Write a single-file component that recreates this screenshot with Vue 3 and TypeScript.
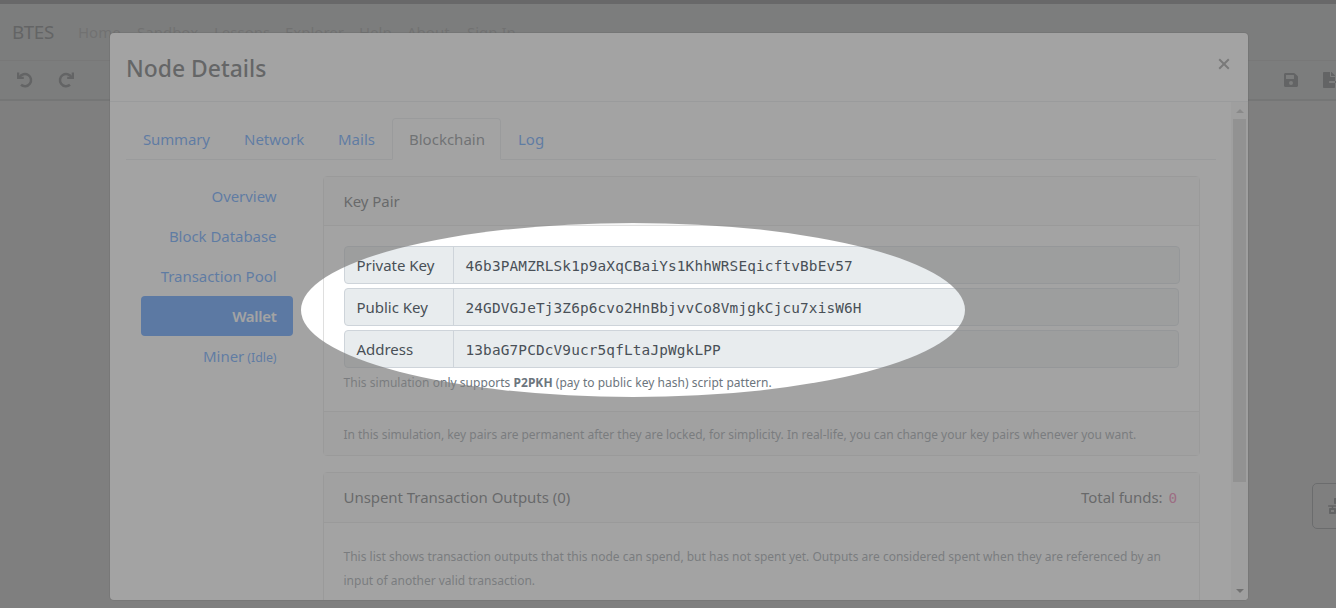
<script setup lang="ts">
interface Item { label: string; cls: string }
const links: Item[] = [
  { label: 'Home', cls: 'home' },
  { label: 'Sandbox', cls: 'sandbox' },
  { label: 'Lessons', cls: 'lessons' },
  { label: 'Explorer', cls: 'explorer' },
  { label: 'Help', cls: 'help' },
  { label: 'About', cls: 'about' },
  { label: 'Sign In', cls: 'sign' },
]
const tabs: Item[] = [
  { label: 'Summary', cls: 'summary' },
  { label: 'Network', cls: 'network' },
  { label: 'Mails', cls: 'mails' },
  { label: 'Blockchain', cls: 'blockchain' },
  { label: 'Log', cls: 'log' },
]
const pills: string[] = ['Overview', 'Block Database', 'Transaction Pool', 'Wallet', 'Miner']
const keys: { label: string; value: string }[] = [
  { label: 'Private Key', value: '46b3PAMZRLSk1p9aXqCBaiYs1KhhWRSEqicftvBbEv57' },
  { label: 'Public Key', value: '24GDVGJeTj3Z6p6cvo2HnBbjvvCo8VmjgkCjcu7xisW6H' },
  { label: 'Address', value: '13baG7PCDcV9ucr5qfLtaJpWgkLPP' },
]
</script>

<template>
  <div class="page">
    <div class="strip"></div>
    <nav class="navbar">
      <span class="brand">BTES</span>
      <a v-for="l in links" :key="l.label" class="link" :class="l.cls">{{ l.label }}</a>
    </nav>
    <div class="toolbar">
      <svg class="icon" viewBox="0 0 16 16"><path class="arc" d="M2.6 5.2A6.1 6.1 0 1 1 4 12.8"/><path d="M0 .4h2.3v4.3h4.5V7H0z"/></svg>
      <svg class="icon flip" viewBox="0 0 16 16"><path class="arc" d="M2.6 5.2A6.1 6.1 0 1 1 4 12.8"/><path d="M0 .4h2.3v4.3h4.5V7H0z"/></svg>
      <span class="grow"></span>
      <svg class="save" viewBox="0 0 448 512"><path d="M434 130l-84-84a48 48 0 0 0-34-14H48C21 32 0 54 0 80v352c0 27 21 48 48 48h352c27 0 48-21 48-48V164a48 48 0 0 0-14-34zM224 416a64 64 0 1 1 0-128 64 64 0 0 1 0 128zm96-304v100c0 7-5 12-12 12H76c-7 0-12-5-12-12V108c0-7 5-12 12-12h228c9 0 16 7 16 16z"/></svg>
      <svg class="export" viewBox="0 0 576 512"><path d="M384 122v6H256V0h6c6 0 12 3 17 7l98 98c4 5 7 11 7 17zm-136 38c-13 0-24-11-24-24V0H24C11 0 0 11 0 24v464c0 13 11 24 24 24h336c13 0 24-11 24-24V352H208c-8 0-16-7-16-16v-32c0-9 8-16 16-16h176V160zm323 149l-96-96c-10-10-27-3-27 11v64h-64v64h64v65c0 14 17 21 27 11l96-97c6-6 6-16 0-22z"/></svg>
    </div>
    <div class="canvas"></div>
    <div class="float-btn">
      <svg viewBox="0 0 640 512"><path d="M640 264v-16c0-8-7-16-16-16H344v-40h72c18 0 32-14 32-32V32c0-18-14-32-32-32H224c-18 0-32 14-32 32v128c0 18 14 32 32 32h72v40H16c-9 0-16 8-16 16v16c0 9 7 16 16 16h104v40H64c-18 0-32 14-32 32v128c0 18 14 32 32 32h160c18 0 32-14 32-32V352c0-18-14-32-32-32h-56v-40h304v40h-56c-18 0-32 14-32 32v128c0 18 14 32 32 32h160c18 0 32-14 32-32V352c0-18-14-32-32-32h-56v-40h104c9 0 16-7 16-16zM256 128V64h128v64zm-64 256v64H96v-64zm352 64h-96v-64h96z"/></svg>
    </div>

    <div class="backdrop">
      <section class="modal">
        <header class="modal-head">
          <h5 class="title">Node Details</h5>
          <svg class="close" viewBox="0 0 12 12"><path d="M1.2 1.2l9.6 9.6M10.8 1.2l-9.6 9.6"/></svg>
        </header>
        <div class="modal-main">
          <div class="content">
            <div class="tabs">
              <a v-for="t in tabs" :key="t.label" class="tab" :class="[t.cls, { active: t.label === 'Blockchain' }]"><span>{{ t.label }}</span></a>
            </div>
            <div class="columns">
              <div class="pills">
                <a v-for="p in pills" :key="p" class="pill" :class="{ current: p === 'Wallet' }">{{ p }}<small v-if="p === 'Miner'"> (Idle)</small></a>
              </div>
              <div class="cards">
                <div class="card">
                  <div class="card-head"><span class="kp">Key Pair</span></div>
                  <div class="card-body">
                    <div v-for="k in keys" :key="k.label" class="group">
                      <span class="label">{{ k.label }}</span>
                      <span class="value">{{ k.value }}</span>
                    </div>
                    <div class="note support">This simulation only supports <b>P2PKH</b> (pay to public key hash) script pattern.</div>
                  </div>
                  <div class="card-foot note"><span class="permanent">In this simulation, key pairs are permanent after they are locked, for simplicity. In real-life, you can change your key pairs whenever you want.</span></div>
                </div>
                <div class="card">
                  <div class="card-head tall"><span class="utxo">Unspent Transaction Outputs (0)</span><span class="funds">Total funds: <code>0</code></span></div>
                  <div class="card-body list">
                    <div class="note spend">This list shows transaction outputs that this node can spend, but has not spent yet. Outputs are considered spent when they are referenced by an<br>input of another valid transaction.</div>
                  </div>
                </div>
              </div>
            </div>
          </div>
          <div class="scrollbar">
            <i class="arrow up"></i>
            <div class="thumb"></div>
            <i class="arrow down"></i>
          </div>
        </div>
      </section>
    </div>
    <div class="spotlight"></div>
  </div>
</template>

<style>
body { margin: 0; overflow: hidden; }
</style>

<style scoped>
* { box-sizing: border-box; }
.page {
  position: relative; width: 1336px; height: 608px; overflow: hidden;
  display: flex; flex-direction: column; background: #fff;
  font: 400 15px/24px "Noto Sans", "Open Sans", sans-serif; color: #2c3035;
}
.strip { height: 4px; background: #565b60; flex: none; }
.navbar { height: 57px; flex: none; display: flex; align-items: center; padding-left: 12px; background: #e9efec; border-bottom: 1px solid #c8cbce; color: #989b9d; white-space: nowrap; }
.brand { width: 66px; font-size: 18.8px; color: #343a40; letter-spacing: -.4px; }
.link { flex: none; }
.home { width: 59px; } .sandbox { width: 77px; } .lessons { width: 71px; }
.explorer { width: 74px; } .help { width: 48px; } .about { width: 60px; }
.toolbar { height: 40px; flex: none; display: flex; align-items: center; padding: 0 0 0 17px; background: #e9efec; border-bottom: 2px solid #b8bbbe; }
.icon { width: 16px; height: 16px; fill: #343a40; flex: none; }
.arc { fill: none; stroke: #343a40; stroke-width: 2.5; }
.flip { transform: scaleX(-1); margin-left: 25px; }
.grow { flex: 1; }
.save { width: 14px; height: 16px; fill: #343a40; margin-right: 25px; flex: none; }
.export { width: 18px; height: 16px; fill: #343a40; margin-right: -5px; flex: none; }
.canvas { flex: 1; background: #fff; }
.float-btn { position: absolute; left: 1312px; top: 483px; width: 54px; height: 46px; border: 1px solid #6c757d; border-radius: 5px; display: flex; align-items: center; padding-left: 15px; }
.float-btn svg { width: 20px; height: 16px; fill: #343a40; }
.backdrop { position: absolute; inset: 0; background: rgba(0,0,0,.5); padding: 33px 88px 0 110px; }
.modal { height: 567px; display: flex; flex-direction: column; background: #fff; border-radius: 4px; overflow: hidden; box-shadow: 0 0 0 1px rgba(0,0,0,.2); }
.modal-head { height: 69px; flex: none; display: flex; justify-content: space-between; align-items: center; padding: 3px 18.5px 0 16px; border-bottom: 1px solid #dee2e6; }
.title { margin: 0; font-size: 22.9px; line-height: 36px; font-weight: 500; color: #212529; }
.close { width: 12px; height: 12px; margin-top: -10px; fill: none; stroke: #6a6a6a; stroke-width: 2; }
.modal-main { flex: 1; min-height: 0; display: flex; }
.content { flex: 1; min-width: 0; padding: 16px 15px 0 16px; }
.tabs { height: 42px; display: flex; border-bottom: 1px solid #dee2e6; color: #0a74ff; }
.tab { height: 42px; padding: 8px 0 0 16px; border: 1px solid transparent; border-radius: 4px 4px 0 0; white-space: nowrap; }
.summary { width: 101px; letter-spacing: -.15px; } .network { width: 94px; } .mails { width: 71px; } .blockchain { width: 109px; } .log { width: 60px; }
.active { color: #495057; background: #fff; border-color: #dee2e6 #dee2e6 #fff; }
.columns { display: flex; padding: 16px 0 0 15px; }
.pills { width: 152px; flex: none; margin-right: 30px; }
.pill { display: block; height: 40px; padding: 8px 16.5px 8px 0; text-align: right; color: #0a74ff; border-radius: 4px; white-space: nowrap; letter-spacing: -.05px; }
.pill small { font-size: 12.4px; }
.current { background: #0068ff; color: #fff; font-weight: 600; letter-spacing: -.3px; }
.cards { width: 877px; flex: none; }
.card { border: 1px solid #dfdfdf; border-radius: 4px; margin-bottom: 16px; }
.card-head { height: 49px; display: flex; justify-content: space-between; align-items: center; padding: 0 22px 0 19.5px; background: #f7f7f7; border-bottom: 1px solid #dfdfdf; white-space: nowrap; letter-spacing: -.05px; }
.tall { height: 50px; padding-bottom: 1px; }
.card-body { height: 185px; padding: 20px 19px 0 20px; }
.list { height: 150px; padding-top: 22px; }
.group { height: 38px; margin-bottom: 4px; margin-right: 1px; display: flex; background: #e8ecee; border: 1px solid #ced4da; border-radius: 4px; color: #495057; }
.group:first-child { margin-right: 0; }
.label { width: 109px; padding: 6px 0 0 11.5px; border-right: 1px solid #ced4da; letter-spacing: -.02px; }
.value { padding: 7px 0 0 11.5px; font: 14.4px/24px "DejaVu Sans Mono", monospace; letter-spacing: .14px; }
.note { font-size: 12px; color: #6c757d; white-space: nowrap; }
.support { margin: -1px 0 0 -.5px; letter-spacing: .035px; }
.card-foot { height: 44px; display: flex; align-items: center; padding: 2px 0 0 19.5px; background: #f7f7f7; border-top: 1px solid #dfdfdf; }
.permanent { letter-spacing: -.018px; }
.spend { margin-left: -.5px; }
.funds code { font: 14.4px "DejaVu Sans Mono", monospace; color: #e83e8c; margin-left: 2px; }
.scrollbar { width: 17px; flex: none; background: #f1f1f1; display: flex; flex-direction: column; align-items: center; }
.thumb { width: 13px; height: 363px; background: #c1c1c1; margin-top: 6px; }
.arrow { width: 0; height: 0; border: 4px solid transparent; }
.up { border-top: 0; border-bottom-color: #a3a3a3; margin-top: 7px; }
.down { border-bottom: 0; border-top-color: #505050; margin-top: auto; margin-bottom: 7px; }
.spotlight { position: absolute; left: 301px; top: 223px; width: 664px; height: 174px; border-radius: 50%; box-shadow: 0 0 0 1400px rgba(127,127,127,.72); }
</style>
